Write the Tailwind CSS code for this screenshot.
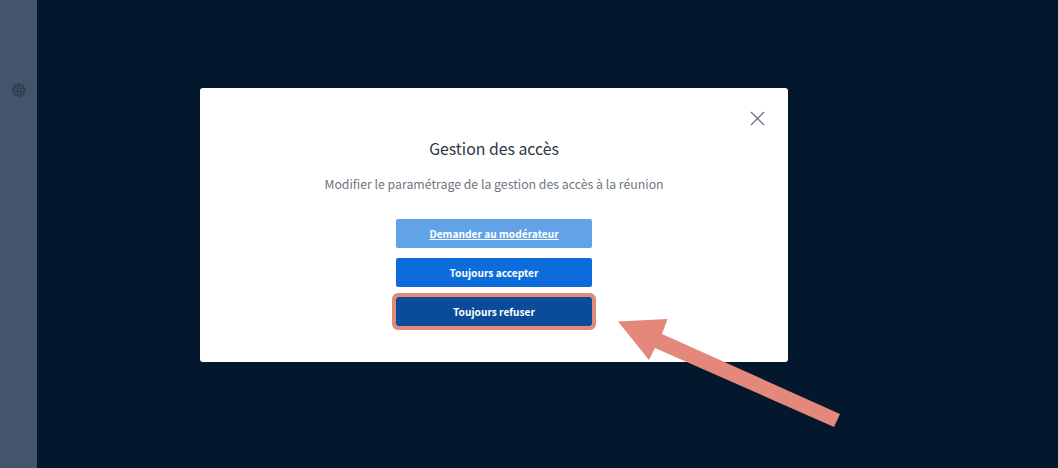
<!DOCTYPE html>
<html lang="fr">

<head>
    <meta charset="UTF-8">
    <meta name="viewport" content="width=device-width, initial-scale=1.0">
    <title>Gestion des accès</title>
    <script src="https://cdn.jsdelivr.net/npm/@tailwindcss/browser@4"></script>
</head>

<body class="relative h-[468px] w-[1058px] overflow-hidden bg-[#03182c] font-['Noto_Sans_CJK_SC','Noto_Sans',sans-serif]">
    <div class="flex h-full">
        <!-- Sidebar -->
        <aside class="flex h-full w-[37px] shrink-0 justify-center bg-[#44546a] pt-[83px]">
            <svg class="h-[14px] w-[14px] text-[#303e53]" viewBox="0 0 24 24" fill="none" stroke="currentColor" stroke-width="3">
                <circle cx="12" cy="12" r="3.5"></circle>
                <path d="M19.4 15a1.65 1.65 0 0 0 .33 1.82l.06.06a2 2 0 1 1-2.83 2.83l-.06-.06a1.65 1.65 0 0 0-2.82 1.17V21a2 2 0 1 1-4 0v-.09a1.65 1.65 0 0 0-2.82-1.13l-.06.06a2 2 0 1 1-2.83-2.83l.06-.06a1.65 1.65 0 0 0-1.17-2.82H3a2 2 0 1 1 0-4h.09a1.65 1.65 0 0 0 1.13-2.82l-.06-.06a2 2 0 1 1 2.83-2.83l.06.06a1.65 1.65 0 0 0 2.82-1.17V3a2 2 0 1 1 4 0v.09a1.65 1.65 0 0 0 2.82 1.13l.06-.06a2 2 0 1 1 2.83 2.83l-.06.06a1.65 1.65 0 0 0 1.17 2.82H21a2 2 0 1 1 0 4h-.09a1.65 1.65 0 0 0-1.51 1.13z"></path>
            </svg>
        </aside>

        <!-- Main area -->
        <main class="flex-1 pl-[163px] pt-[88px]">
            <div class="relative flex h-[274px] w-[588px] flex-col items-center rounded-[3px] bg-white pt-[49px]">
                <button class="absolute right-[23px] top-[23px] text-[#6b7280]">
                    <svg class="block h-[15px] w-[15px]" viewBox="0 0 15 15" fill="none" stroke="currentColor" stroke-width="1.3">
                        <path d="M1 1l13 13M14 1L1 14"></path>
                    </svg>
                </button>
                <h2 class="text-[15.8px] leading-[24px] text-[#2b3545]">Gestion des accès</h2>
                <p class="mt-[11px] text-[12.3px] leading-[24px] text-[#6f7681]">Modifier le paramétrage de la gestion des accès à la réunion</p>

                <div class="mt-[23px] flex w-[196px] flex-col gap-[10px]">
                    <button class="h-[29px] rounded-[2px] bg-[#62a2e6] text-[10.2px] font-bold leading-[29px] text-white underline">Demander au modérateur</button>
                    <button class="h-[29px] rounded-[2px] bg-[#0c6cdc] text-[10.2px] font-bold leading-[29px] text-white">Toujours accepter</button>
                    <button class="h-[29px] rounded-[2px] bg-[#0a4c9a] text-[10.2px] font-bold leading-[29px] text-white outline-[4px] outline-[#e08a7a]">Toujours refuser</button>
                </div>
            </div>
        </main>
    </div>

    <!-- Annotation arrow -->
    <svg class="absolute left-0 top-0" width="1058" height="468" viewBox="0 0 1058 468">
        <polygon fill="#e3887a" points="618,321.5 667.5,319 662,334 840,414 834,427 655,348 649,360"></polygon>
    </svg>
</body>

</html>
